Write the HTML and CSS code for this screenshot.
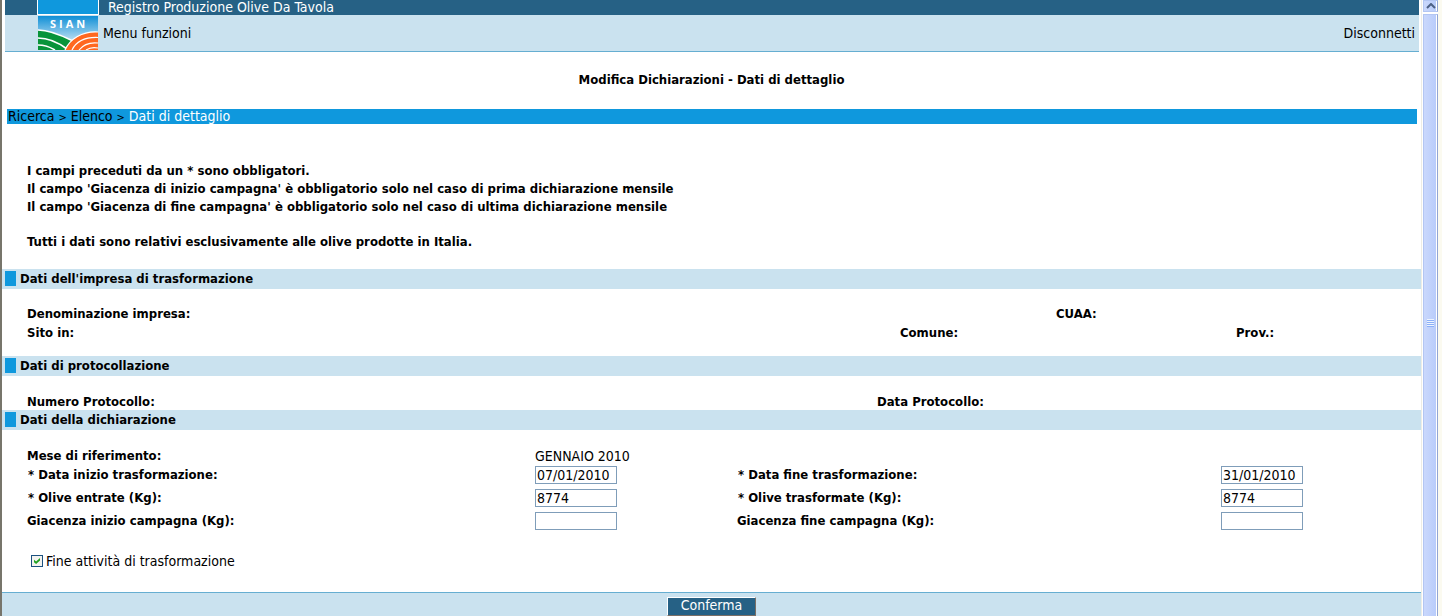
FILE: index.html
```html
<!DOCTYPE html>
<html lang="it">
<head>
<meta charset="utf-8">
<title>Registro Produzione Olive Da Tavola</title>
<link rel="stylesheet" href="styles.css">
</head>
<body>
<div class="window">
  <main class="page">
    <header class="header">
      <div class="title-bar">
        <span class="logo-top"></span>
        <span class="app-title">Registro Produzione Olive Da Tavola</span>
      </div>
      <nav class="menu-bar">
        <svg class="logo" viewBox="0 0 60 34" role="img" aria-label="SIAN">
          <defs>
            <linearGradient id="sky" x1="0" y1="0" x2="0" y2="1">
              <stop offset="0" stop-color="#0f8fd6"/>
              <stop offset="0.7" stop-color="#b5dcf2"/>
            </linearGradient>
          </defs>
          <rect width="60" height="34" fill="url(#sky)"/>
          <path d="M0 14C12 14 25 20 35 25L27 34H0Z" fill="#08943a"/>
          <path d="M0 14C12 14 25 20 35 25M0 22C10 22 21 27 29 33M0 29C6 29 12 31 17 34" fill="none" stroke="#fff" stroke-width="1.600"/>
          <path d="M27 34C32 23 44 15 60 16V34Z" fill="#ff6820"/>
          <path d="M27 34C32 23 44 15 60 16M34 34C38 26 47 21 60 21.500M41 34C45 29 51 26 60 27M48 34C51 32 55 31 60 32" fill="none" stroke="#fff" stroke-width="1.200"/>
          <text class="logo-text" x="12" y="12">SIAN</text>
        </svg>
        <a class="menu-link" href="#">Menu funzioni</a>
        <a class="menu-link logout" href="#">Disconnetti</a>
      </nav>
    </header>

    <h1 class="page-title">Modifica Dichiarazioni - Dati di dettaglio</h1>

    <nav class="breadcrumb"><a href="#">Ricerca</a> <span class="separator">&gt;</span> <a href="#">Elenco</a> <span class="separator">&gt;</span> <span class="current">Dati di dettaglio</span></nav>

    <div class="notes">
      <p>I campi preceduti da un * sono obbligatori.</p>
      <p>Il campo 'Giacenza di inizio campagna' è obbligatorio solo nel caso di prima dichiarazione mensile</p>
      <p>Il campo 'Giacenza di fine campagna' è obbligatorio solo nel caso di ultima dichiarazione mensile</p>
      <p class="note-last">Tutti i dati sono relativi esclusivamente alle olive prodotte in Italia.</p>
    </div>

    <form class="form">
      <h2 class="section-title">Dati dell'impresa di trasformazione</h2>
      <div class="section company">
        <div class="row name-row"><b>Denominazione impresa:</b><b>CUAA:</b></div>
        <div class="row site-row"><b>Sito in:</b><b>Comune:</b><b>Prov.:</b></div>
      </div>

      <h2 class="section-title">Dati di protocollazione</h2>
      <div class="section">
        <div class="row protocol-row"><b>Numero Protocollo:</b><b>Data Protocollo:</b></div>
      </div>

      <h2 class="section-title">Dati della dichiarazione</h2>
      <div class="section">
        <div class="row month-row"><b>Mese di riferimento:</b><span class="month">GENNAIO 2010</span></div>
        <div class="declaration">
          <label class="starred" for="d1">* Data inizio trasformazione:</label><input class="field" id="d1" type="text" value="07/01/2010">
          <label class="starred" for="d2">* Data fine trasformazione:</label><input class="field" id="d2" type="text" value="31/01/2010">
          <label class="starred" for="o1">* Olive entrate (Kg):</label><input class="field" id="o1" type="text" value="8774">
          <label class="starred" for="o2">* Olive trasformate (Kg):</label><input class="field" id="o2" type="text" value="8774">
          <label for="g1">Giacenza inizio campagna (Kg):</label><input class="field" id="g1" type="text">
          <label for="g2">Giacenza fine campagna (Kg):</label><input class="field" id="g2" type="text">
        </div>
      </div>

      <div class="check-row">
        <input class="check" id="end" type="checkbox" checked>
        <label for="end">Fine attività di trasformazione</label>
      </div>

      <div class="actions"><button class="confirm" type="button">Conferma</button></div>
    </form>
  </main>

  <div class="scrollbar" aria-hidden="true">
    <div class="scroll-up">
      <svg class="arrow" viewBox="0 0 10 6"><path d="M1 5L5 1L9 5" fill="none" stroke="#4d6185" stroke-width="2"/></svg>
    </div>
    <div class="thumb"><span class="grip"></span></div>
  </div>
</div>
</body>
</html>
```
FILE: styles.css
```css
* { box-sizing: border-box; }

body {
  margin: 0;
  background: #fff;
  color: #000;
  font: 14px/18px "DejaVu Sans Condensed", Verdana, sans-serif;
}

a { color: inherit; text-decoration: none; }
h1, h2, p { margin: 0; }

.window {
  display: flex;
  min-height: 100vh;
  border-left: 2px solid #77756b;
  border-right: 4px solid #fbfaf0;
}

.page {
  flex: 1;
  display: flex;
  flex-direction: column;
}

/* Header */
.header { margin: 0 2px 0 3px; }

.title-bar {
  display: flex;
  height: 15px;
  padding-left: 32px;
  background: #266185;
  color: #fff;
  line-height: 14px;
}

.logo-top {
  width: 62px;
  background: #0f98dd;
  border: solid #fff;
  border-width: 0 1px 1px;
}

.app-title { margin-left: 9px; }

.menu-bar {
  display: flex;
  align-items: center;
  height: 37px;
  padding: 0 4px 0 33px;
  background: #cae2ef;
  border-bottom: 1px solid #66aed1;
}

.logo { width: 60px; height: 34px; }

.logo-text {
  fill: #fff;
  font: bold 11px "Open Sans", sans-serif;
  letter-spacing: 3px;
}

.menu-link { margin-left: 5px; }
.logout { margin-left: auto; }

.page-title {
  margin-top: 18px;
  font-size: 13px;
  line-height: 20px;
  text-align: center;
}

.breadcrumb {
  height: 15px;
  margin: 19px 4px 0 5px;
  padding-left: 1px;
  background: #0f98dd;
  line-height: 15px;
}

.separator { font-size: 11px; }
.current { color: #fff; }

.notes {
  padding: 38px 25px 18px;
  font-size: 13px;
  font-weight: bold;
}

.note-last { margin-top: 17px; }

/* Form */
.form {
  flex: 1;
  display: flex;
  flex-direction: column;
}

.section-title {
  display: flex;
  align-items: center;
  gap: 4px;
  height: 20px;
  padding-left: 3px;
  background: #cae2ef;
  font-size: 13px;
}

.section-title::before {
  content: "";
  align-self: flex-start;
  width: 11px;
  height: 15px;
  margin-top: 2px;
  background: #0f98dd;
}

.section {
  padding: 16px 0 0 25px;
  font-size: 13px;
}

.company { padding: 15px 0 14px 25px; }
.row { display: grid; line-height: 19px; }
.name-row { grid-template-columns: 1029fr 365fr; }
.site-row { grid-template-columns: 873fr 336fr 185fr; }
.protocol-row { grid-template-columns: 850fr 544fr; padding-top: 2px; line-height: 16px; }
.month-row { grid-template-columns: 508fr 886fr; line-height: 20px; }
.month { font-size: 14px; }

.declaration {
  display: grid;
  grid-template-columns: 508fr 202fr 484fr 200fr;
  row-gap: 5px;
  align-items: center;
  font-weight: bold;
}

.starred { padding-left: 1px; }

.field {
  width: 82px;
  height: 18px;
  padding: 0 1px;
  border: 1px solid #7f9db9;
  background: #fff;
  color: #000;
  font: 14px "DejaVu Sans Condensed", Verdana, sans-serif;
}

.check-row {
  display: flex;
  align-items: center;
  gap: 3px;
  padding: 22px 29px;
}

.check {
  appearance: none;
  width: 12px;
  height: 12px;
  margin: 0;
  border: 1px solid #1c5180;
  background: #f3f3ef;
  display: grid;
  place-items: center;
}

.check:checked::before {
  content: "";
  width: 6px;
  height: 6px;
  background: #21a121;
  clip-path: polygon(0 30%, 35% 58%, 100% 0, 100% 42%, 35% 100%, 0 72%);
}

.actions {
  flex: 1;
  display: flex;
  justify-content: center;
  align-items: flex-start;
  padding-top: 4px;
  border-top: 1px solid #66aed1;
  background: #cae2ef;
}

.confirm {
  width: 89px;
  height: 19px;
  padding: 0 0 2px;
  border: 1px solid;
  border-color: #fff #7b6f65 #7b6f65 #fff;
  background: #266185;
  color: #fff;
  font: 14px/15px "DejaVu Sans Condensed", Verdana, sans-serif;
}

/* Scrollbar */
.scrollbar {
  width: 17px;
  display: flex;
  flex-direction: column;
  gap: 2px;
  padding-left: 1px;
  border-left: 1px solid #eeede5;
}

.scroll-up,
.thumb {
  display: grid;
  place-items: center;
  border: 1px solid #b3c6f3;
  border-right: 1px solid #91a5d5;
  background: linear-gradient(to right, #cad8fc, #b7cbfb);
  box-shadow: inset -1px 0 #fff;
}

.scroll-up { height: 12px; }
.thumb { flex: 1; border-bottom: 0; }
.arrow { width: 10px; height: 6px; }

.grip {
  width: 7px;
  height: 8px;
  margin-top: 14px;
  background: repeating-linear-gradient(#eef4fe 0 1px, #8cb0f8 1px 2px);
}
```
